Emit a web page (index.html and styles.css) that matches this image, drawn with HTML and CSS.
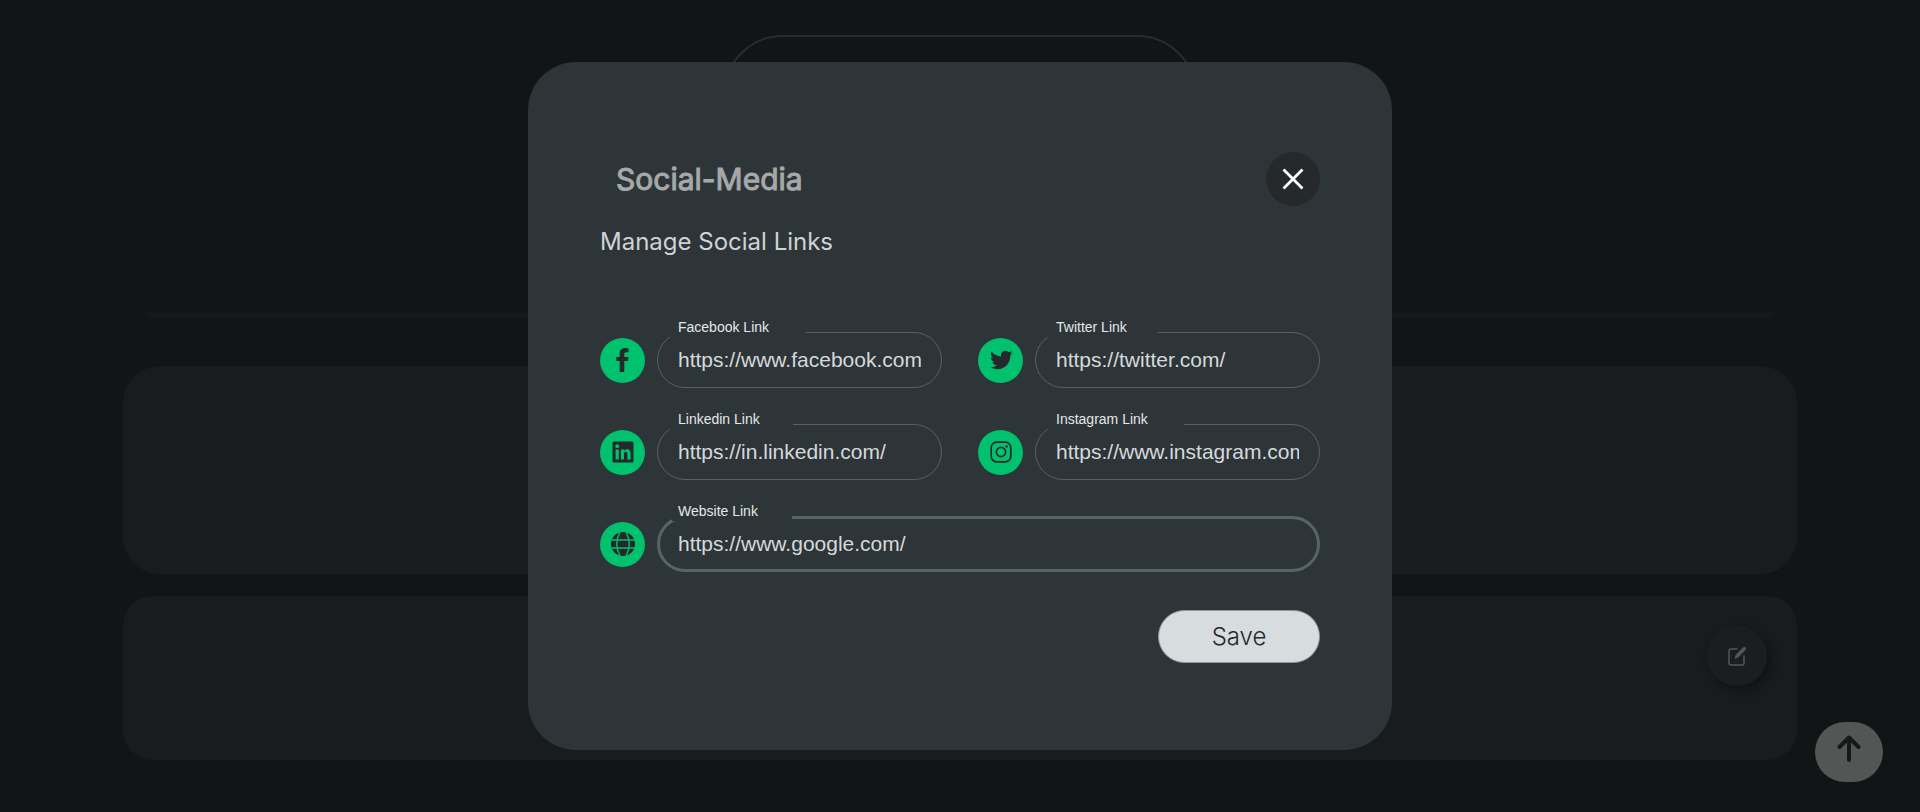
FILE: index.html
```html
<!DOCTYPE html>
<html lang="en">
<head>
<meta charset="utf-8">
<meta name="viewport" content="width=device-width, initial-scale=1">
<title>Social-Media</title>
<link rel="stylesheet" href="styles.css">
</head>
<body>
<main class="page">
  <div class="profile-frame"></div>
  <div class="divider"></div>
  <section class="card card-large"></section>
  <section class="card card-small">
    <button class="edit-button" type="button" aria-label="Edit">
      <svg width="20" height="20" viewBox="0 0 20 20" fill="none" stroke="currentColor" stroke-linecap="round" stroke-linejoin="round">
        <path d="M10 3H4Q2 3 2 5v12q0 2 2 2h11q2 0 2-2v-7" stroke-width="1.5"/>
        <path d="M8.300 12l1-3.300L16.300 1.700q1.100-.9 2 0t0 2L11.300 11z" fill="currentColor" stroke-width="1"/>
      </svg>
    </button>
  </section>
</main>
<button class="top-button" type="button" aria-label="Back to top">
  <svg width="24" height="28" viewBox="0 0 24 28" fill="none" stroke="currentColor" stroke-width="4" stroke-linecap="round" stroke-linejoin="round"><path d="M12 26V4M2.500 13L12 3.500l9.500 9.500"/></svg>
</button>
<div class="overlay">
  <div class="dialog" role="dialog" aria-modal="true" aria-labelledby="dialog-title">
    <header class="dialog-header">
      <h1 class="dialog-title" id="dialog-title">Social-Media</h1>
      <button class="close-button" type="button" aria-label="Close">
        <svg width="22" height="22" viewBox="0 0 22 22" stroke="currentColor" stroke-width="2.800" stroke-linecap="square"><path d="M2.500 2.500l17 17M19.500 2.500l-17 17"/></svg>
      </button>
    </header>
    <p class="dialog-subtitle">Manage Social Links</p>
    <form class="links">
      <div class="link-row">
        <span class="badge"><svg width="24" height="24" viewBox="0 0 24 24" fill="currentColor"><path d="M17.500 4.300V.4Q16 .1 14 .1C10.600.1 8.700 2.200 8.700 5.600V9H5.200v4h3.500v11h4.600V13h3.600l.7-4h-4.300V6.300c0-1.400.6-2.100 2.200-2.100z"/></svg></span>
        <div class="field">
          <label class="label notch-facebook" for="facebook">Facebook Link</label>
          <input class="input" id="facebook" type="text" value="https://www.facebook.com/">
        </div>
      </div>
      <div class="link-row">
        <span class="badge"><svg width="24" height="24" viewBox="0 0 24 24" fill="currentColor"><path d="M23.640 4.937c-.835.37-1.732.62-2.675.733a4.670 4.670 0 0 0 2.048-2.578 9.300 9.300 0 0 1-2.958 1.130 4.660 4.660 0 0 0-7.938 4.250 13.229 13.229 0 0 1-9.602-4.868c-.4.690-.630 1.490-.630 2.342A4.660 4.660 0 0 0 3.960 9.824a4.647 4.647 0 0 1-2.110-.583v.060a4.660 4.660 0 0 0 3.737 4.568 4.692 4.692 0 0 1-2.104.080 4.661 4.661 0 0 0 4.352 3.234 9.348 9.348 0 0 1-5.786 1.995 9.500 9.500 0 0 1-1.112-.065 13.175 13.175 0 0 0 7.140 2.093c8.570 0 13.255-7.098 13.255-13.254 0-.2-.005-.402-.014-.602a9.470 9.470 0 0 0 2.323-2.410z"/></svg></span>
        <div class="field">
          <label class="label notch-twitter" for="twitter">Twitter Link</label>
          <input class="input" id="twitter" type="text" value="https://twitter.com/">
        </div>
      </div>
      <div class="link-row">
        <span class="badge"><svg width="24" height="24" viewBox="0 0 24 24"><rect x="1.500" y="1.500" width="21" height="21" rx="1.500" fill="currentColor"/><g class="cutout"><circle cx="6.200" cy="6.200" r="1.900"/><path d="M4.600 9.400h3.200v10H4.600zM9.900 9.400H13v1.400c.7-1.100 1.800-1.600 3.100-1.600 2.600 0 3.500 1.600 3.500 4.500v5.700h-3.200v-5.200c0-1.500-.4-2.400-1.600-2.400s-1.800.9-1.800 2.400v5.200H9.900z"/></g></svg></span>
        <div class="field">
          <label class="label notch-linkedin" for="linkedin">Linkedin Link</label>
          <input class="input" id="linkedin" type="text" value="https://in.linkedin.com/">
        </div>
      </div>
      <div class="link-row">
        <span class="badge"><svg width="24" height="24" viewBox="0 0 24 24" fill="none" stroke="currentColor" stroke-width="1.700"><rect x="2.200" y="2.200" width="19.600" height="19.600" rx="5.500"/><circle cx="12" cy="12" r="4.600"/><circle cx="17.600" cy="6.400" r="1.200" fill="currentColor" stroke="none"/></svg></span>
        <div class="field">
          <label class="label notch-instagram" for="instagram">Instagram Link</label>
          <input class="input" id="instagram" type="text" value="https://www.instagram.com/">
        </div>
      </div>
      <div class="link-row link-row-wide">
        <span class="badge"><svg width="24" height="24" viewBox="0 0 24 24"><circle cx="12" cy="12" r="12" fill="currentColor"/><path class="meridians" d="M0 8h24M0 16h24M9 0Q2.500 12 9 24M15 0q6.500 12 0 24"/></svg></span>
        <div class="field">
          <label class="label label-active notch-website" for="website">Website Link</label>
          <input class="input input-active" id="website" type="text" value="https://www.google.com/">
        </div>
      </div>
      <button class="save-button" type="submit">Save</button>
    </form>
  </div>
</div>
</body>
</html>
```

FILE: styles.css
```css
* { box-sizing: border-box; }

body {
  margin: 0;
  min-height: 100vh;
  background: #111515;
  font-family: Inter, "Liberation Sans", sans-serif;
}

button { cursor: pointer; font: inherit; }

.page {
  display: flex;
  flex-direction: column;
  width: 87.2%;
  margin: 0 auto;
  padding-top: 35px;
}

.profile-frame {
  align-self: center;
  width: 474px;
  height: 240px;
  border: 2px solid #292c2d;
  border-radius: 60px;
}

.divider {
  height: 7px;
  margin: 36px 24px 48px;
  background: #141818;
}

.card { background: #181c1c; }

.card-large {
  height: 208px;
  border-radius: 37px;
}

.card-small {
  display: flex;
  justify-content: flex-end;
  height: 164px;
  margin-top: 22px;
  padding: 30px;
  border-radius: 30px;
}

.edit-button {
  display: grid;
  place-items: center;
  width: 60px;
  height: 60px;
  padding: 0;
  border: 0;
  border-radius: 50%;
  background: #1a1e21;
  color: #555655;
  box-shadow: 4px 4px 10px #101313;
}

.top-button {
  position: fixed;
  right: 37px;
  bottom: 30px;
  display: flex;
  justify-content: center;
  align-items: flex-start;
  width: 68px;
  height: 60px;
  padding: 12px 0 0;
  border: 0;
  border-radius: 30px;
  background: #535654;
  color: #151919;
}

.overlay {
  position: fixed;
  inset: 0;
  display: flex;
  justify-content: center;
  align-items: center;
  pointer-events: none;
}

.dialog {
  width: 45%;
  min-width: 780px;
  padding: 90px 72px 87px;
  border-radius: 48px;
  background: #2e3538;
  pointer-events: auto;
}

.dialog-header {
  display: flex;
  justify-content: space-between;
  align-items: center;
  padding-left: 16px;
}

.dialog-title {
  margin: 0;
  color: #a6a8a9;
  font-size: 30px;
  font-weight: 400;
  line-height: 40px;
  -webkit-text-stroke: 1px #a6a8a9;
}

.close-button {
  display: grid;
  place-items: center;
  width: 54px;
  height: 54px;
  padding: 0;
  border: 0;
  border-radius: 50%;
  background: #25292b;
  color: #fff;
}

.dialog-subtitle {
  margin: 21px 0 75px;
  color: #ced3d5;
  font-size: 24px;
  line-height: 30px;
}

.links {
  display: grid;
  grid-template-columns: 1fr 1fr;
  gap: 36px;
}

.link-row {
  display: flex;
  align-items: center;
  gap: 12px;
}

.link-row-wide { grid-column: 1 / -1; }

.badge {
  display: grid;
  flex: none;
  place-items: center;
  width: 45px;
  height: 45px;
  border-radius: 50%;
  background: #00c16e;
  color: #25292b;
}

.cutout { fill: #00c16e; }

.meridians {
  fill: none;
  stroke: #00c16e;
  stroke-width: 1.4;
}

.field {
  position: relative;
  flex: 1;
  min-width: 0;
  font-family: "Liberation Sans", Arial, sans-serif;
}

.input {
  display: block;
  width: 100%;
  height: 56px;
  padding: 0 20px;
  border: 1px solid #596164;
  border-radius: 28px;
  outline: 0;
  background: transparent;
  color: #d5d9db;
  font-family: inherit;
  font-size: 21px;
}

.input-active {
  padding: 0 18px;
  border: 3px solid #596467;
}

/* The label sits over the border and opens a notch in it. */
.label {
  position: absolute;
  top: -14px;
  left: 13px;
  padding-left: 8px;
  background: #2e3538;
  color: #e4e7e8;
  font-size: 14px;
  line-height: 19px;
}

.label-active {
  left: 15px;
  padding-left: 6px;
}

.notch-facebook, .notch-instagram { width: 136px; }
.notch-twitter { width: 110px; }
.notch-linkedin { width: 123px; }
.notch-website { width: 120px; }

.save-button {
  grid-column: 1 / -1;
  justify-self: end;
  width: 162px;
  height: 53px;
  margin-top: 2px;
  border: 1px solid #90979a;
  border-radius: 27px;
  background: #d7dcdf;
  color: #25292b;
  font-size: 24px;
  font-weight: 300;
}
```
